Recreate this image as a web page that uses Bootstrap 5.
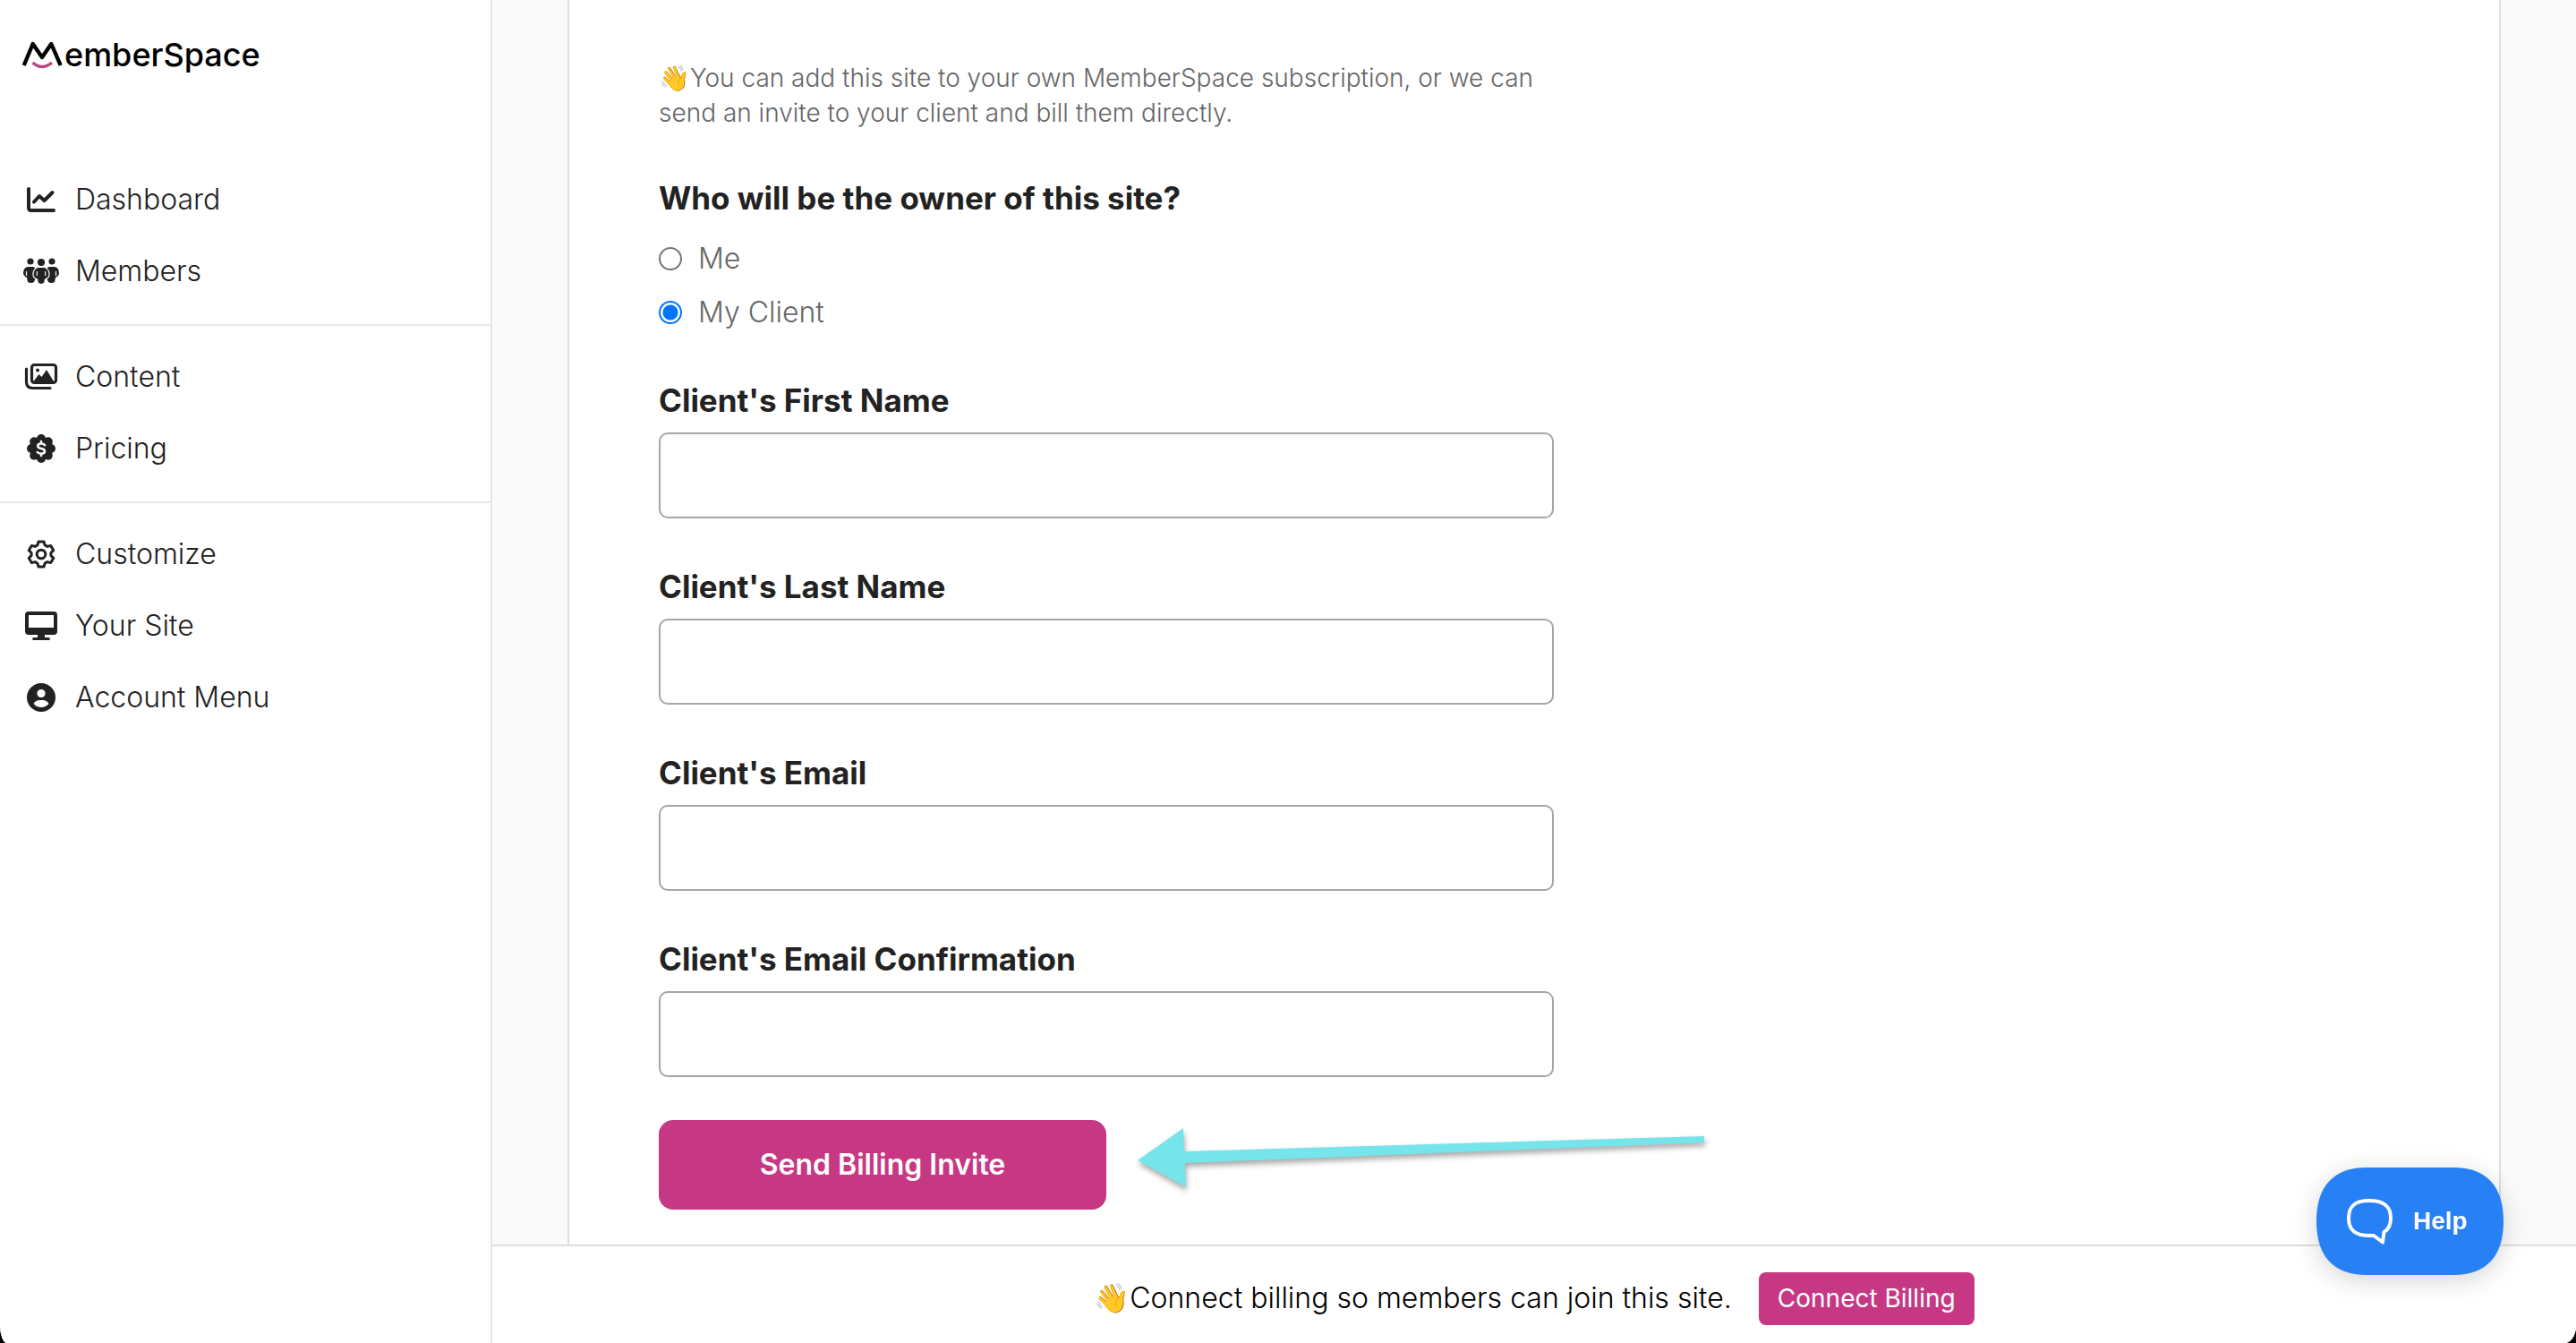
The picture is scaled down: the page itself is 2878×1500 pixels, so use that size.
<!DOCTYPE html>
<html lang="en">
<head>
<meta charset="utf-8">
<meta name="viewport" content="width=device-width, initial-scale=1">
<title>MemberSpace</title>
<link href="https://cdn.jsdelivr.net/npm/bootstrap@5.3.0/dist/css/bootstrap.min.css" rel="stylesheet">
<style>
  body { background: #000; color: #222; font-family: Inter, "Liberation Sans", sans-serif; font-weight: 300; font-size: 32px; line-height: 44px; }
  .app-shell { background: #fff; border-radius: 0 0 13px 8px / 0 0 19px 20px; }
  .side-panel { width: 550px; border-right: 2px solid #e6e6e6; background: #fff; }
  .brand-link { padding: 38px 22px 0; margin-bottom: 99px; height: 46px; box-sizing: content-box; color: #000; font-size: 36px; font-weight: 500; }
  .nav-group { padding: 17px 0 19px; border-bottom: 2px solid #e6e6e6; }
  .nav-group:first-child { padding-top: 0; }
  .nav-group:last-child { border-bottom: 0; }
  .side-link { height: 80px; padding-left: 24px; gap: 16px; color: #222; }
  .side-link svg { width: 44px; height: 44px; flex: none; }
  .work-area { background: #fafafa; padding: 0 84px; }
  .sheet { background: #fff; border: solid #dedede; border-width: 0 2px; padding: 68px 100px 39px; }
  .form-col { max-width: 1000px; }
  .hint { font-size: 28px; line-height: 39px; color: #666; margin-bottom: 53px; }
  .field-title { font-size: 35px; line-height: 44px; font-weight: 700; color: #222; }
  .owner-set { margin-bottom: 46px; }
  .owner-row { height: 60px; gap: 18px; color: #666; }
  .owner-row input { appearance: none; width: 26px; height: 26px; margin: 0; border: 2px solid #767676; border-radius: 50%; background: #fff; }
  .owner-row input:checked { border-color: #0075ff; background: radial-gradient(circle, #0075ff 8px, #fff 9px); }
  .field { margin-bottom: 54px; }
  .field:last-of-type { margin-bottom: 48px; }
  .field label { margin-bottom: 14px; }
  .field .form-control { height: 96px; border: 2px solid #a6a6a6; border-radius: 10px; font-size: 32px; }
  .btn-brand { --bs-btn-bg: #c73884; --bs-btn-color: #fff; --bs-btn-hover-bg: #ae2e72; --bs-btn-hover-color: #fff; --bs-btn-border-width: 0; }
  .btn-send { width: 500px; height: 100px; border-radius: 16px; font-size: 32px; font-weight: 600; }
  .pointer-arrow { width: 660px; height: 100px; margin-left: 24px; flex: none; overflow: visible; filter: drop-shadow(1px 4px 3px rgba(0,0,0,.35)); }
  .billing-bar { height: 110px; border-top: 2px solid #dedede; background: #fff; color: #000; gap: 30px; padding-top: 8px; }
  .billing-bar p, .billing-bar .btn { margin-bottom: 0; }
  .btn-connect { width: 241px; height: 59px; padding: 0; border-radius: 8px; font-size: 28px; font-weight: 400; }
  .help-btn { right: 81px; bottom: 76px; width: 209px; height: 120px; border: 0; padding: 0 0 0 33px; background: none; color: #fff; font: bold 28px/44px "Liberation Sans", Arial, sans-serif; gap: 23px; filter: drop-shadow(0 6px 14px rgba(0,0,0,.16)); }
  .help-shape { inset: 0; }
</style>
<script src="https://cdn.jsdelivr.net/npm/bootstrap@5.3.0/dist/js/bootstrap.bundle.min.js"></script>
</head>
<body>
<div class="app-shell d-flex vh-100 overflow-hidden">
  <aside class="side-panel flex-shrink-0">
    <a href="#" class="brand-link d-flex align-items-center text-decoration-none">
      <svg width="50" height="40" viewBox="0 0 50 40" fill="none" stroke-width="4.4" aria-hidden="true">
        <path d="M4.700 32 14.700 8 25 23 35.300 8 45.700 32" stroke="#000" stroke-linejoin="round"/>
        <path d="M14.500 29q10.500 9 21.500 0" stroke="#b9478a" stroke-width="3.500"/>
      </svg>
      <span>emberSpace</span>
    </a>
    <nav>
      <div class="nav-group">
        <a href="#" class="side-link d-flex align-items-center text-decoration-none">
          <svg viewBox="0 0 44 44" fill="none" stroke="#222" stroke-width="4" stroke-linecap="round" stroke-linejoin="round"><path d="M8 10v21q0 3 3 3h25M14 24.500l6-6.500 5.500 5 9-9"/></svg>
          <span>Dashboard</span></a>
        <a href="#" class="side-link d-flex align-items-center text-decoration-none">
          <svg viewBox="0 0 44 44" fill="#222">
            <circle cx="10" cy="11" r="3.600"/><path d="M7 17h6q5 1 5 8l-4 9q-3 2-7 0l-1-5q-4-2-4-5 0-6 5-7z"/>
            <circle cx="34" cy="11" r="3.600"/><path d="M37 17h-6q-5 1-5 8l4 9q3 2 7 0l1-5q4-2 4-5 0-6-5-7z"/>
            <path d="M5.500 22v5M38.500 22v5" stroke="#fff" stroke-width="1.200"/>
            <path d="M18 17.500h8q5 2 5 8 0 4-4.500 5.500l-.8 4q-3.700 3-7.400 0l-.8-4Q13 29.500 13 25.500q0-6 5-8z" stroke="#fff" stroke-width="1.200"/>
            <circle cx="22" cy="12" r="4.100"/>
            <path d="M17.300 22v5M26.700 22v5" stroke="#fff" stroke-width="1.100"/>
          </svg>
          <span>Members</span></a>
      </div>
      <div class="nav-group">
        <a href="#" class="side-link d-flex align-items-center text-decoration-none">
          <svg viewBox="0 0 44 44" fill="none" stroke="#222" stroke-width="3.200" stroke-linecap="round"><rect x="11.500" y="8.500" width="27" height="20" rx="3"/><path d="M5.500 13v14.500q0 7 7 7H32"/><circle cx="18" cy="14.500" r="2" fill="#222" stroke="none"/><path d="M13.500 27l6-8 3 3 5.500-8 8 13z" fill="#222" stroke="none"/></svg>
          <span>Content</span></a>
        <a href="#" class="side-link d-flex align-items-center text-decoration-none">
          <svg viewBox="0 0 44 44" fill="#222"><circle cx="22" cy="22" r="13"/><g><circle cx="22" cy="11" r="5"/><circle cx="29.800" cy="14.200" r="5"/><circle cx="33" cy="22" r="5"/><circle cx="29.800" cy="29.800" r="5"/><circle cx="22" cy="33" r="5"/><circle cx="14.200" cy="29.800" r="5"/><circle cx="11" cy="22" r="5"/><circle cx="14.200" cy="14.200" r="5"/></g><path d="M26 18.200q-1.500-1.700-4-1.700-3.800 0-3.800 2.600 0 2.200 3.800 2.900 4 .7 4 3 0 2.700-4 2.700-2.700 0-4.200-1.700M22 14v2.500M22 27.500V30" fill="none" stroke="#fff" stroke-width="2.500" stroke-linecap="round"/></svg>
          <span>Pricing</span></a>
      </div>
      <div class="nav-group">
        <a href="#" class="side-link d-flex align-items-center text-decoration-none">
          <svg viewBox="-22 -22 44 44" fill="none" stroke="#222" stroke-width="3" stroke-linejoin="round"><path d="M-4.100-10.200-3-14.100H3L4.100-10.200 6.800-8.600 10.700-9.600 13.700-4.400 10.900-1.500V1.500L13.700 4.400 10.700 9.600 6.800 8.600 4.100 10.200 3 14.100H-3L-4.100 10.200-6.800 8.600-10.700 9.600-13.700 4.400-10.900 1.500V-1.500L-13.700-4.400-10.700-9.600-6.800-8.600Z"/><circle r="4.800"/></svg>
          <span>Customize</span></a>
        <a href="#" class="side-link d-flex align-items-center text-decoration-none">
          <svg viewBox="0 0 44 44" fill="#222"><path fill-rule="evenodd" d="M8 6h28q4 0 4 4v18q0 4-4 4H26v3h4q2 0 2 1.500T30 38H14q-2 0-2-1.500t2-1.500h4v-3H8q-4 0-4-4V10q0-4 4-4zm0 4v14h28V10z"/></svg>
          <span>Your Site</span></a>
        <a href="#" class="side-link d-flex align-items-center text-decoration-none">
          <svg viewBox="0 0 44 44"><circle cx="22" cy="22" r="16" fill="#222"/><circle cx="22" cy="17.500" r="4.600" fill="#fff"/><path d="M13.500 29q2.500-4 6.500-4h4q4 0 6.500 4-3.500 4-8.500 4t-8.500-4z" fill="#fff"/></svg>
          <span>Account Menu</span></a>
      </div>
    </nav>
  </aside>

  <div class="flex-grow-1 d-flex flex-column">
    <main class="work-area flex-grow-1 overflow-hidden">
      <form class="sheet">
        <div class="form-col">
          <p class="hint">👋You can add this site to your own MemberSpace subscription, or we can send an invite to your client and bill them directly.</p>
          <fieldset class="owner-set">
            <legend class="field-title mb-3">Who will be the owner of this site?</legend>
            <div class="owner-row d-flex align-items-center"><input type="radio" name="owner" id="owner-me"><label for="owner-me">Me</label></div>
            <div class="owner-row d-flex align-items-center"><input type="radio" name="owner" id="owner-client" checked><label for="owner-client">My Client</label></div>
          </fieldset>
          <div class="field"><label class="field-title d-block" for="first">Client's First Name</label><input class="form-control" id="first" type="text"></div>
          <div class="field"><label class="field-title d-block" for="last">Client's Last Name</label><input class="form-control" id="last" type="text"></div>
          <div class="field"><label class="field-title d-block" for="email">Client's Email</label><input class="form-control" id="email" type="email"></div>
          <div class="field"><label class="field-title d-block" for="email2">Client's Email Confirmation</label><input class="form-control" id="email2" type="email"></div>
        </div>
        <div class="d-flex">
          <button type="button" class="btn btn-brand btn-send">Send Billing Invite</button>
          <svg class="pointer-arrow" viewBox="0 0 660 100" aria-hidden="true"><path d="M11 45 62 9l1 26 581-17v7L64 48l1 27z" fill="#76e5eb"/></svg>
        </div>
      </form>
    </main>
    <footer class="billing-bar d-flex justify-content-center flex-shrink-0 align-items-center">
      <p>👋Connect billing so members can join this site.</p>
      <button type="button" class="btn btn-brand btn-connect">Connect Billing</button>
    </footer>
  </div>
</div>

<button type="button" class="help-btn position-fixed d-flex align-items-center">
  <svg class="help-shape position-absolute" width="209" height="120" viewBox="0 0 209 120" aria-hidden="true"><path d="M56 0h97c38 0 56 22 56 60s-18 60-56 60H56C18 120 0 98 0 60S18 0 56 0z" fill="#2880f5"/></svg>
  <svg class="position-relative" width="52" height="52" viewBox="0 0 52 52" fill="none" stroke="#fff" stroke-width="4" stroke-linejoin="round" aria-hidden="true"><path d="M26 3C10 3 3 9 3 22.500S10 42 26 42q3 0 5 0l10 7.500 1.500-11.500Q50 34 50 22.500C50 9 42 3 26 3z"/></svg>
  <span class="position-relative">Help</span>
</button>
</body>
</html>
